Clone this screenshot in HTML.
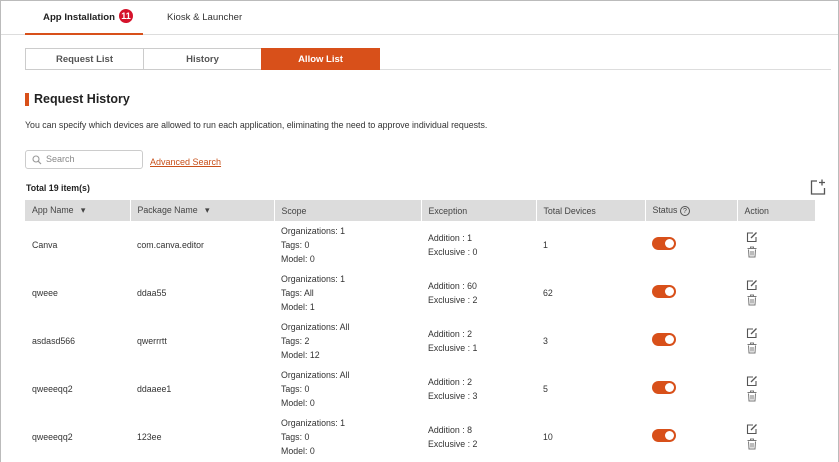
<!DOCTYPE html>
<html><head><style>
*{box-sizing:border-box;margin:0;padding:0}
body{width:839px;height:462px;overflow:hidden;background:#fff;font-family:"Liberation Sans",Arial,sans-serif;color:#333;position:relative}
.frame{position:absolute;left:0;top:0;width:839px;height:462px;border:1px solid #bbb;border-bottom:none}
.abs{position:absolute}
.tabline{left:1px;right:1px;top:34px;height:1px;background:#ddd}
.t1{left:25px;top:0;width:118px;height:35px;border-bottom:2px solid #d8501a;font-size:9.6px;font-weight:bold;text-align:center;line-height:36px;color:#222;padding-left:8px;white-space:nowrap}
.badge{display:inline-block;width:14px;height:14px;border-radius:7px;background:#d5132b;color:#fff;font-size:9px;line-height:14px;text-align:center;vertical-align:1px;margin-left:4px}
.t2{left:167px;top:0;line-height:36px;font-size:9.6px;color:#333}
.sub{top:48px;height:22px;border:1px solid #ccc;font-size:9.5px;font-weight:bold;color:#555;text-align:center;line-height:21px;background:#fff}
.subline{left:380px;right:8px;top:69px;height:1px;background:#ddd}
h1{position:absolute;left:25px;top:93px;font-size:12.5px;font-weight:bold;border-left:4px solid #d8501a;padding-left:5px;line-height:13px;color:#222}
.desc{left:25px;top:120px;font-size:8.8px;color:#333}
.search{left:25px;top:150px;width:118px;height:19px;border:1px solid #ccc;border-radius:3px;font-size:9px;color:#888;line-height:17px;padding-left:20px}
.adv{left:150px;top:157px;font-size:9px;color:#c8501a;text-decoration:underline}
.total{left:26px;top:183px;font-size:8.8px;font-weight:bold;color:#222}
table{position:absolute;left:25px;top:200px;width:790px;border-collapse:collapse;font-size:8.8px}
th{background:#dcdcdc;font-weight:normal;text-align:left;height:21px;padding-left:7px;border-left:1px solid #fff;color:#444}
td{height:48px;padding-left:7px;line-height:14px;vertical-align:middle;color:#333}
.tog{display:inline-block;width:24px;height:13px;border-radius:7px;background:#d8501a;position:relative;margin-left:0}
.tog:after{content:"";position:absolute;right:2px;top:2px;width:9px;height:9px;border-radius:5px;background:#fff}
</style></head><body>
<div class="frame"></div>
<div class="abs tabline"></div>
<div class="abs t1">App Installation<span class="badge">11</span></div>
<div class="abs t2">Kiosk &amp; Launcher</div>
<div class="abs sub" style="left:25px;width:119px">Request List</div>
<div class="abs sub" style="left:143px;width:119px">History</div>
<div class="abs sub" style="left:261px;width:119px;background:#d8501a;border-color:#d8501a;color:#fff">Allow List</div>
<div class="abs subline"></div>
<h1>Request History</h1>
<div class="abs desc">You can specify which devices are allowed to run each application, eliminating the need to approve individual requests.</div>
<div class="abs search"><svg class="abs" style="left:6px;top:4px" width="10" height="10" viewBox="0 0 10 10"><circle cx="4" cy="4" r="3" fill="none" stroke="#999" stroke-width="1.1"/><path d="M6.2 6.2L9 9" stroke="#999" stroke-width="1.2"/></svg>Search</div>
<div class="abs adv">Advanced Search</div>
<div class="abs total">Total 19 item(s)</div>
<svg class="abs" style="left:810px;top:179px" width="16" height="16" viewBox="0 0 16 16"><path d="M7 2H1.5V15H14.5V9" fill="none" stroke="#555" stroke-width="1.3"/><path d="M12 0.5V6.5M9 3.5H15" stroke="#555" stroke-width="1.3"/></svg>
<table>
<tr><th style="width:105px;border-left:none">App Name &nbsp;&nbsp;▾</th><th style="width:144px">Package Name &nbsp;&nbsp;▾</th><th style="width:147px">Scope</th><th style="width:115px">Exception</th><th style="width:109px">Total Devices</th><th style="width:92px">Status <span style="display:inline-block;width:10px;height:10px;border:1px solid #555;border-radius:50%;font-size:7px;text-align:center;line-height:9px">?</span></th><th>Action</th></tr>
<tr><td>Canva</td><td>com.canva.editor</td><td>Organizations: 1<br>Tags: 0<br>Model: 0</td><td>Addition : 1<br>Exclusive : 0</td><td>1</td><td><span class="tog"></span></td><td>ACT</td></tr>
<tr><td>qweee</td><td>ddaa55</td><td>Organizations: 1<br>Tags: All<br>Model: 1</td><td>Addition : 60<br>Exclusive : 2</td><td>62</td><td><span class="tog"></span></td><td>ACT</td></tr>
<tr><td>asdasd566</td><td>qwerrrtt</td><td>Organizations: All<br>Tags: 2<br>Model: 12</td><td>Addition : 2<br>Exclusive : 1</td><td>3</td><td><span class="tog"></span></td><td>ACT</td></tr>
<tr><td>qweeeqq2</td><td>ddaaee1</td><td>Organizations: All<br>Tags: 0<br>Model: 0</td><td>Addition : 2<br>Exclusive : 3</td><td>5</td><td><span class="tog"></span></td><td>ACT</td></tr>
<tr><td>qweeeqq2</td><td>123ee</td><td>Organizations: 1<br>Tags: 0<br>Model: 0</td><td>Addition : 8<br>Exclusive : 2</td><td>10</td><td><span class="tog"></span></td><td>ACT</td></tr>
</table>
<script>
var ic='<svg width="12" height="28" viewBox="0 0 12 28" style="display:block;margin-left:2px"><path d="M7 2H1.5V10.5H10V6" fill="none" stroke="#555" stroke-width="1.1"/><path d="M5 7L10.5 1.5" stroke="#555" stroke-width="1.3"/><path d="M1.5 17.5H10.5M4.5 17.5V16H7.5V17.5M2.5 18.5L3 26H9L9.5 18.5M5 20V24.5M7 20V24.5" fill="none" stroke="#777" stroke-width="1"/></svg>';
document.querySelectorAll('td').forEach(function(t){if(t.textContent=='ACT')t.innerHTML=ic;});
</script>
</body></html>
